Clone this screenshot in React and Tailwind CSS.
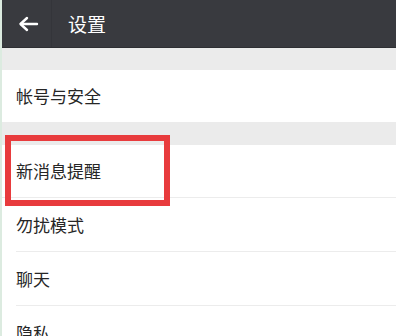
import React from 'react';

const rows = ['勿扰模式', '聊天', '隐私'];

export default function App() {
  return (
    <div className="w-[396px] h-[336px] overflow-hidden bg-[#ebebeb] font-['Noto_Sans_CJK_SC',sans-serif] border-l-2 border-[#dcebe0]">
      {/* Header */}
      <div className="h-[48px] bg-[#393a3f] flex items-center border-b border-[#2e2f33]">
        <div className="w-[50px] h-full flex items-center pl-[16px] border-r border-[#34353a]">
          <svg width="21" height="16" viewBox="0 0 21 16" fill="none" stroke="white" strokeWidth="2.4" strokeLinecap="round" strokeLinejoin="round">
            <path d="M19 8H3" />
            <path d="M9 2L2.5 8L9 14" />
          </svg>
        </div>
        <span className="ml-[16px] text-white text-[19px] leading-none">设置</span>
      </div>

      <div className="h-[22px]" />

      <div className="bg-white h-[52px] flex items-center pl-[14px]">
        <span className="text-[17px] text-[#262626]">帐号与安全</span>
      </div>

      <div className="h-[23px]" />

      <div className="bg-white">
        <div className="relative h-[53px] flex items-center pl-[14px] border-b border-[#ececec]">
          <span className="text-[17px] text-[#262626]">新消息提醒</span>
          <div className="absolute left-[3px] top-[-10px] w-[165px] h-[71px] border-[6px] border-[#e83b3d]" />
        </div>
        {rows.map((r) => (
          <div key={r} className="ml-[14px] h-[54px] flex items-center border-b border-[#ececec]">
            <span className="text-[17px] text-[#262626]">{r}</span>
          </div>
        ))}
      </div>
    </div>
  );
}
